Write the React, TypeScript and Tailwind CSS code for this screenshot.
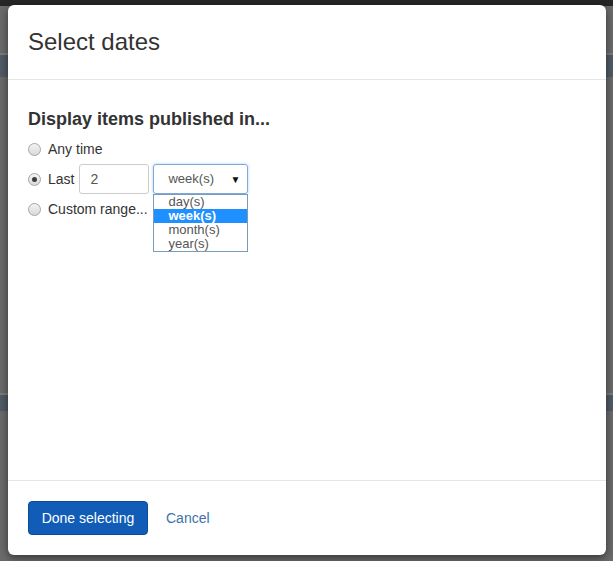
import React from "react";

function Radio({ checked }: { checked?: boolean }) {
  return (
    <span className="flex h-[13px] w-[13px] shrink-0 items-center justify-center rounded-full border border-[#a6a6a6] bg-gradient-to-b from-[#f4f4f4] to-[#d9d9d9]">
      {checked ? <span className="h-[5px] w-[5px] rounded-full bg-[#3d3d3d]" /> : null}
    </span>
  );
}

export default function App() {
  return (
    <div
      className="relative h-[561px] w-[613px] overflow-hidden bg-[#6b6b6b]"
      style={{ fontFamily: '"Liberation Sans", Arial, sans-serif' }}
    >
      {/* backdrop page */}
      <div className="flex h-full flex-col">
        <div className="h-[6px] bg-[#262626]" />
        <div className="h-[47px]" />
        <div className="h-[2px] bg-[#7c7c7c]" />
        <div className="h-[22px] bg-[#505b66]" />
        <div className="h-[316px]" />
        <div className="h-[2px] bg-[#7c7c7c]" />
        <div className="h-[16px] bg-[#505b66]" />
      </div>

      {/* modal */}
      <div className="absolute left-[8px] top-[5px] flex h-[550px] w-[598px] flex-col rounded-[6px] bg-white text-[#333] shadow-[0_3px_9px_rgba(0,0,0,0.5)]">
        <div className="border-b border-[#e5e5e5] px-[20px] py-[20px]">
          <h4 className="text-[24px] leading-[34px] text-[#333]">Select dates</h4>
        </div>

        <div className="flex-1 px-[20px] pt-[29px]">
          <h5 className="text-[18px] font-bold leading-[20px] text-[#333]">
            Display items published in...
          </h5>
          <div className="mt-[5px] flex flex-col text-[14px]">
            <div className="flex h-[30px] items-center gap-[7px]">
              <Radio />
              <span>Any time</span>
            </div>
            <div className="flex h-[30px] items-center">
              <Radio checked />
              <span className="ml-[7px]">Last</span>
              <div className="ml-[5px] flex h-[30px] w-[70px] items-center rounded-[3px] border border-[#cccccc] pl-[10px] text-[14px] text-[#555]">
                2
              </div>
              <div className="relative ml-[4px]">
                <div className="flex h-[30px] w-[95px] items-center justify-between rounded-[3px] border border-[#7fa9d6] pl-[14px] pr-[7px] text-[13px] text-[#555] shadow-[0_0_3px_rgba(102,175,233,0.6)]">
                  <span>week(s)</span>
                  <span className="text-[10px] text-[#111]">▼</span>
                </div>
                <div className="absolute left-0 top-[30px] z-10 flex w-[95px] flex-col border border-[#7a9cba] bg-white text-[13px] leading-[14px] text-[#555]">
                  <div className="pl-[14px]">day(s)</div>
                  <div className="bg-[#1e90ff] pl-[14px] font-bold text-white">week(s)</div>
                  <div className="pl-[14px]">month(s)</div>
                  <div className="pl-[14px]">year(s)</div>
                </div>
              </div>
            </div>
            <div className="flex h-[30px] items-center gap-[7px]">
              <Radio />
              <span>Custom range...</span>
            </div>
          </div>
        </div>

        <div className="flex items-center gap-[18px] border-t border-[#e5e5e5] px-[20px] py-[20px]">
          <button className="h-[34px] w-[120px] rounded-[4px] border border-[#0b4c98] bg-[#105cb6] text-[14px] text-white">
            Done selecting
          </button>
          <span className="text-[14px] text-[#3d72ad]">Cancel</span>
        </div>
      </div>
    </div>
  );
}
